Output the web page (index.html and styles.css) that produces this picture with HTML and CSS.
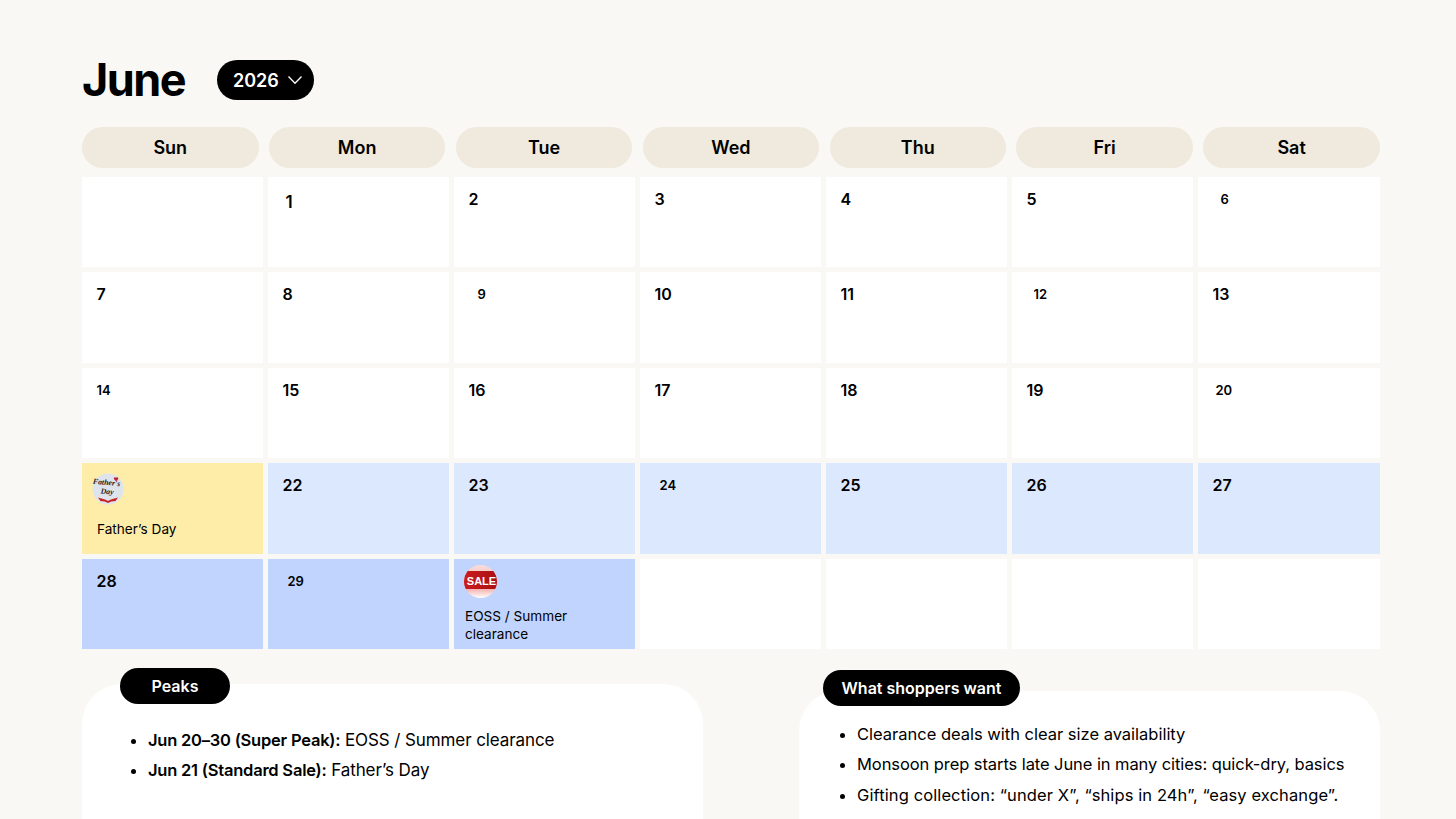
FILE: index.html
```html
<!DOCTYPE html>
<html lang="en">
<head>
<meta charset="utf-8">
<title>June 2026</title>
<link rel="stylesheet" href="styles.css">
</head>
<body>
<main class="page">
  <header class="head">
    <h1 class="month">June</h1>
    <div class="year">2026
      <svg class="chev" viewBox="0 0 14 8" width="14" height="8"><path d="M.5.5 7 7.300 13.500.5" fill="none" stroke="#fff" stroke-width="1.300"/></svg>
    </div>
  </header>
  <div class="days">
    <div class="day">Sun</div><div class="day">Mon</div><div class="day">Tue</div><div class="day">Wed</div><div class="day">Thu</div><div class="day">Fri</div><div class="day">Sat</div>
  </div>
  <section class="grid">
    <div class="cell"></div>
    <div class="cell"><span class="num one">1</span></div>
    <div class="cell"><span class="num">2</span></div>
    <div class="cell"><span class="num">3</span></div>
    <div class="cell"><span class="num">4</span></div>
    <div class="cell"><span class="num">5</span></div>
    <div class="cell"><span class="num small in-8">6</span></div>

    <div class="cell"><span class="num">7</span></div>
    <div class="cell"><span class="num">8</span></div>
    <div class="cell"><span class="num small in-9">9</span></div>
    <div class="cell"><span class="num">10</span></div>
    <div class="cell"><span class="num">11</span></div>
    <div class="cell"><span class="num small in-7">12</span></div>
    <div class="cell"><span class="num">13</span></div>

    <div class="cell"><span class="num small">14</span></div>
    <div class="cell"><span class="num">15</span></div>
    <div class="cell"><span class="num">16</span></div>
    <div class="cell"><span class="num">17</span></div>
    <div class="cell"><span class="num">18</span></div>
    <div class="cell"><span class="num">19</span></div>
    <div class="cell"><span class="num small in-3">20</span></div>

    <div class="cell yellow">
      <svg class="badge" viewBox="0 0 32 32" width="32" height="32">
        <circle cx="16" cy="16" r="15.500" fill="#dfe4ec"/>
        <text class="script" transform="rotate(5 15 11)" x="14.500" y="12" text-anchor="middle" font-size="7.800">Father's</text>
        <text class="script" transform="rotate(5 15 20)" x="15" y="21" text-anchor="middle" font-size="7.800">Day</text>
        <path d="M24.100 4.800c1-1.400 2.800-.3 2 1.200-.4.800-1.300 1.500-2 2.200-.8-.7-1.700-1.400-2.100-2.200-.7-1.500 1.100-2.600 2.100-1.200z" fill="#c4202a"/>
        <path d="M6 24.500c3.500 1 7 1.500 10 3.500 3-2 6.500-2.500 10-3.500l-2.500 3.500c-3 .2-5.500.7-7.500 2-2-1.300-4.500-1.800-7.500-2z" fill="#c8201f"/>
      </svg>
      <p class="event">Father’s Day</p>
    </div>
    <div class="cell blue"><span class="num">22</span></div>
    <div class="cell blue"><span class="num">23</span></div>
    <div class="cell blue"><span class="num small in-5">24</span></div>
    <div class="cell blue"><span class="num">25</span></div>
    <div class="cell blue"><span class="num">26</span></div>
    <div class="cell blue"><span class="num">27</span></div>

    <div class="cell deep"><span class="num">28</span></div>
    <div class="cell deep"><span class="num small in-5">29</span></div>
    <div class="cell deep sale-cell">
      <svg class="badge sale" viewBox="0 0 33 33" width="33" height="33">
        <defs>
          <clipPath id="disc"><circle cx="16.500" cy="16.500" r="16.500"/></clipPath>
          <linearGradient id="fade" x1="0" y1="0" x2="0" y2="1"><stop offset="0" stop-color="#f8dcd9"/><stop offset=".72" stop-color="#f3b0ac"/><stop offset="1" stop-color="#ffffff"/></linearGradient>
          <linearGradient id="band" x1="0" y1="0" x2="1" y2="0"><stop offset="0" stop-color="#cc1c1e"/><stop offset="1" stop-color="#a91014"/></linearGradient>
        </defs>
        <circle cx="16.500" cy="16.500" r="16.500" fill="url(#fade)"/>
        <rect x="0" y="6" width="33" height="18" fill="url(#band)" clip-path="url(#disc)"/>
        <text class="sale-text" x="17.500" y="19.800" text-anchor="middle" font-size="11">SALE</text>
      </svg>
      <p class="event">EOSS / Summer clearance</p>
    </div>
    <div class="cell"></div>
    <div class="cell"></div>
    <div class="cell"></div>
    <div class="cell"></div>
  </section>
  <section class="notes">
    <article class="card peaks">
      <h2 class="tag peaks-tag">Peaks</h2>
      <ul class="list">
        <li><b>Jun 20–30 (Super Peak):</b> EOSS / Summer clearance</li>
        <li><b>Jun 21 (Standard Sale):</b> Father’s Day</li>
      </ul>
    </article>
    <article class="card wants">
      <h2 class="tag wants-tag">What shoppers want</h2>
      <ul class="list">
        <li class="wide-a">Clearance deals with clear size availability</li>
        <li>Monsoon prep starts late June in many cities: quick-dry, basics</li>
        <li class="wide-b">Gifting collection: “under X”, “ships in 24h”, “easy exchange”.</li>
      </ul>
    </article>
  </section>
</main>
</body>
</html>
```
FILE: styles.css
```css
* { box-sizing: border-box; }
html, body { margin: 0; height: 819px; overflow: hidden; }
body { background: #f9f8f4; color: #000; font-family: Inter, "Liberation Sans", sans-serif; }
.page { height: 819px; overflow: hidden; padding: 50px 76px 0 82px; }
.head { display: flex; align-items: center; gap: 34px; height: 60px; margin-bottom: 17px; }
.month { margin: 0; width: 101px; font-size: 45px; line-height: 58px; font-weight: 650; letter-spacing: -1.500px; white-space: nowrap; }
.year { display: flex; align-items: center; gap: 9px; width: 97px; height: 40px; padding-left: 16px; border-radius: 20px; background: #000; color: #fff; font-size: 18px; font-weight: 600; }
.days { display: grid; grid-template-columns: repeat(7, 176.500px); column-gap: 10.400px; margin-bottom: 9px; }
.day { height: 41px; padding-bottom: 1px; border-radius: 20.500px; background: #efe9de; display: flex; align-items: center; justify-content: center; font-size: 18px; font-weight: 600; }
.grid { display: grid; grid-template-columns: repeat(6, 181px) 182px; grid-auto-rows: 90.400px; gap: 5px; }
.cell { background: #fff; padding: 13px 14px 0 14.500px; }
.yellow { background: #fdeda8; padding: 10px 10px 0; }
.blue { background: #dce8fe; }
.deep { background: #c1d4fd; }
.sale-cell { padding: 6px 10px 0; }
.num { display: block; font-size: 16px; line-height: 18px; font-weight: 600; }
.num.small { font-size: 13px; }
.num.one { font-size: 17px; padding: 3px 0 0 3px; }
.in-3 { margin-left: 3px; }
.in-5 { margin-left: 5px; }
.in-7 { margin-left: 7px; }
.in-8 { margin-left: 8px; }
.in-9 { margin-left: 9px; }
.badge { display: block; }
.script { font-family: "Liberation Serif", serif; font-style: italic; font-weight: 700; fill: #222; }
.sale-text { font-family: "Liberation Sans", sans-serif; font-weight: 700; fill: #fff; }
.event { margin: 0; font-size: 13.600px; line-height: 18px; font-weight: 400; }
.yellow .event { margin: 15px 0 0 5px; }
.sale-cell .event { margin: 9px 0 0 1px; }
.notes { display: flex; justify-content: space-between; align-items: flex-start; margin-top: 35px; }
.card { position: relative; background: #fff; border-radius: 40px 40px 0 0; height: 135px; }
.peaks { width: 621px; padding: 41px 0 0 48px; }
.wants { width: 581px; height: 128px; margin-top: 7px; padding: 28px 0 0 40px; }
.tag { position: absolute; margin: 0; height: 36px; display: flex; align-items: center; justify-content: center; border-radius: 18px; background: #000; color: #fff; font-size: 16px; font-weight: 600; }
.peaks-tag { left: 38px; top: -16px; width: 110px; }
.wants-tag { left: 24px; top: -21px; width: 197px; }
.list { margin: 0; padding: 0 0 0 18px; font-size: 17px; line-height: 30px; letter-spacing: -.100px; }
.wants .list { font-size: 16.500px; letter-spacing: -.080px; }
.wants .list li { line-height: 30.500px; }
.wants .list .wide-a { letter-spacing: -.010px; }
.wants .list .wide-b { letter-spacing: .110px; }
.list b { font-size: 16.500px; font-weight: 600; letter-spacing: -.220px; }
```
